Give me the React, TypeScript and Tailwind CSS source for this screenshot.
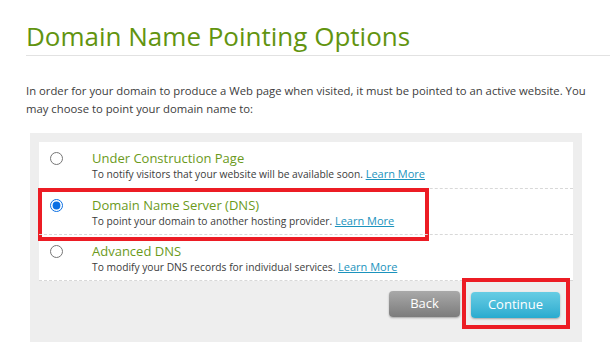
import React from "react";

const options = [
  {
    id: "construction",
    title: "Under Construction Page",
    desc: "To notify visitors that your website will be available soon.",
  },
  {
    id: "dns",
    title: "Domain Name Server (DNS)",
    desc: "To point your domain to another hosting provider.",
  },
  {
    id: "advanced",
    title: "Advanced DNS",
    desc: "To modify your DNS records for individual services.",
  },
];

export default function App() {
  return (
    <div className="w-[610px] h-[364px] bg-white overflow-hidden font-['Open_Sans',sans-serif]">
      {/* HEADING */}
      <div className="pt-[19px] pl-[26px]">
        <h1 className="text-[26px] leading-[34px] text-[#62940f] border-b border-[#e2e2e2] pb-[2px]">
          Domain Name Pointing Options
        </h1>
      </div>

      {/* INTRO */}
      <p className="pl-[26px] pr-[14px] mt-[26px] text-[11.3px] leading-[18px] text-[#3c3c3c]">
        In order for your domain to produce a Web page when visited, it must be pointed to an active website. You may choose to point your domain name to:
      </p>

      {/* PANEL */}
      <div className="ml-[30px] mt-[15px] w-[552px] h-[209px] bg-[#eeeeee] p-[9px]">
        <div className="bg-white border-b border-dashed border-[#d8d8d8]">
          {options.map((opt, index) => (
            <div
              key={opt.id}
              className={`relative flex items-start h-[46px] ${index > 0 ? "border-t border-dashed border-[#d8d8d8]" : ""}`}
            >
              {index === 1 && (
                <div className="absolute -left-[1px] -top-[1px] w-[391px] h-[53px] border-4 border-[#ec1c24]" />
              )}
              <input
                type="radio"
                name="pointing"
                defaultChecked={index === 1}
                className="ml-[11px] mt-[10px] w-[13px] h-[13px] accent-[#0b6fe3]"
              />
              <div className="ml-[29px] pt-[7px]">
                <div className="text-[13px] leading-[18px] text-[#6b9a1b]">{opt.title}</div>
                <div className="text-[10.25px] leading-[14px] text-[#3c3c3c]">
                  {opt.desc}{" "}
                  <a href="#" className="text-[11px] text-[#1b93bd] underline">
                    Learn More
                  </a>
                </div>
              </div>
            </div>
          ))}
        </div>

        {/* BUTTONS */}
        <div className="flex justify-end gap-[11px] pr-[13px] mt-[10px]">
          <button className="w-[71px] h-[26px] rounded-[4px] bg-gradient-to-b from-[#a9a9a9] to-[#7c7c7c] text-white text-[13px] shadow-[0_1px_2px_rgba(0,0,0,0.3)]">
            Back
          </button>
          <div className="relative">
            <div className="absolute -left-[9px] -top-[13px] -right-[10px] -bottom-[11px] border-4 border-[#ec1c24]" />
            <button className="relative w-[89px] h-[26px] rounded-[4px] bg-gradient-to-b from-[#66cde4] to-[#28abcf] text-white text-[13px] shadow-[0_1px_2px_rgba(0,0,0,0.3)]">
              Continue
            </button>
          </div>
        </div>
      </div>
    </div>
  );
}
